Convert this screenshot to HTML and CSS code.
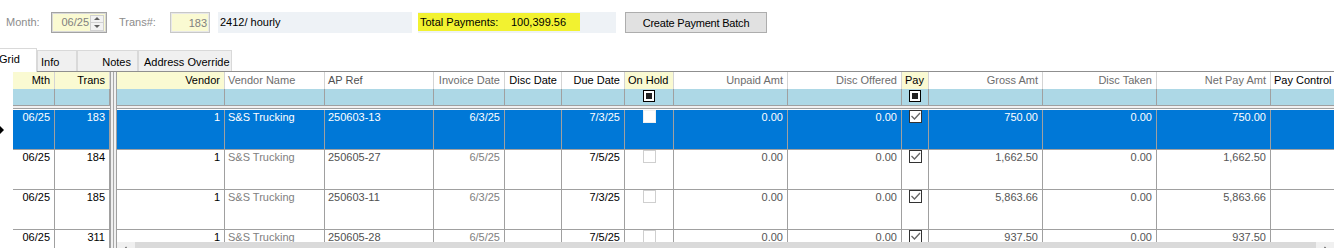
FILE: index.html
```html
<!DOCTYPE html>
<html lang="en">

<head>
  <meta charset="UTF-8" />
  <title>Payment Batch</title>
  <link rel="stylesheet" href="styles.css">
</head>

<body>
  <div class="toolbar">
    <span class="lbl lbl-month">Month:</span>
    <div class="field month">
      <span class="val">06/25</span>
      <div class="spin">
        <span class="up"></span>
        <span class="down"></span>
      </div>
    </div>
    <span class="lbl lbl-trans">Trans#:</span>
    <div class="field trans">183</div>
    <div class="field desc">2412/ hourly</div>
    <div class="field total">
      <div class="hl"><span class="tl">Total Payments:</span><span>100,399.56</span></div>
    </div>
    <button class="btn">Create Payment Batch</button>
  </div>

  <div class="tabs">
    <div class="tab active">Grid</div>
    <div class="tab info">Info</div>
    <div class="tab notes">Notes</div>
    <div class="tab addr">Address Override</div>
  </div>

  <div class="gridarea">
    <!-- frozen columns -->
    <div class="pane left">
      <div class="row hdr">
        <div class="ind"></div>
        <div class="c r y">Mth</div>
        <div class="c r y">Trans</div>
      </div>
      <div class="row flt">
        <div class="ind"></div>
        <div class="c"></div>
        <div class="c"></div>
      </div>
      <div class="sep"></div>
      <div class="row data sel">
        <div class="ind"><span class="arrow"></span></div>
        <div class="c r">06/25</div>
        <div class="c r">183</div>
      </div>
      <div class="row data">
        <div class="ind"></div>
        <div class="c r">06/25</div>
        <div class="c r">184</div>
      </div>
      <div class="row data">
        <div class="ind"></div>
        <div class="c r">06/25</div>
        <div class="c r">185</div>
      </div>
      <div class="row data">
        <div class="ind"></div>
        <div class="c r">06/25</div>
        <div class="c r">311</div>
      </div>
    </div>

    <div class="splitter"></div>

    <div class="pane main">
      <div class="main-body">
        <div class="row hdr">
          <div class="c r y">Vendor</div>
          <div class="c g">Vendor Name</div>
          <div class="c dk">AP Ref</div>
          <div class="c r g">Invoice Date</div>
          <div class="c r">Disc Date</div>
          <div class="c r">Due Date</div>
          <div class="c y">On Hold</div>
          <div class="c r g">Unpaid Amt</div>
          <div class="c r g">Disc Offered</div>
          <div class="c y">Pay</div>
          <div class="c r g">Gross Amt</div>
          <div class="c r g">Disc Taken</div>
          <div class="c r g">Net Pay Amt</div>
          <div class="c last">Pay Control</div>
        </div>
        <div class="row flt">
          <div class="c"></div>
          <div class="c"></div>
          <div class="c"></div>
          <div class="c"></div>
          <div class="c"></div>
          <div class="c"></div>
          <div class="c ck"><span class="tri"></span></div>
          <div class="c"></div>
          <div class="c"></div>
          <div class="c ck"><span class="tri"></span></div>
          <div class="c"></div>
          <div class="c"></div>
          <div class="c"></div>
          <div class="c last"></div>
        </div>
        <div class="sep"></div>

        <div class="row data sel">
          <div class="c r">1</div>
          <div class="c g">S&amp;S Trucking</div>
          <div class="c dk">250603-13</div>
          <div class="c r g">6/3/25</div>
          <div class="c r"></div>
          <div class="c r">7/3/25</div>
          <div class="c ck"><span class="box hold"></span></div>
          <div class="c r m">0.00</div>
          <div class="c r m">0.00</div>
          <div class="c ck"><span class="box pay"><svg viewBox="0 0 11 11" width="11" height="11"><polyline points="1.5,5 4.5,8 10,2" /></svg></span></div>
          <div class="c r m">750.00</div>
          <div class="c r m">0.00</div>
          <div class="c r m">750.00</div>
          <div class="c last"></div>
        </div>

        <div class="row data">
          <div class="c r">1</div>
          <div class="c g">S&amp;S Trucking</div>
          <div class="c dk">250605-27</div>
          <div class="c r g">6/5/25</div>
          <div class="c r"></div>
          <div class="c r">7/5/25</div>
          <div class="c ck"><span class="box hold"></span></div>
          <div class="c r m">0.00</div>
          <div class="c r m">0.00</div>
          <div class="c ck"><span class="box pay"><svg viewBox="0 0 11 11" width="11" height="11"><polyline points="1.5,5 4.5,8 10,2" /></svg></span></div>
          <div class="c r m">1,662.50</div>
          <div class="c r m">0.00</div>
          <div class="c r m">1,662.50</div>
          <div class="c last"></div>
        </div>

        <div class="row data">
          <div class="c r">1</div>
          <div class="c g">S&amp;S Trucking</div>
          <div class="c dk">250603-11</div>
          <div class="c r g">6/3/25</div>
          <div class="c r"></div>
          <div class="c r">7/3/25</div>
          <div class="c ck"><span class="box hold"></span></div>
          <div class="c r m">0.00</div>
          <div class="c r m">0.00</div>
          <div class="c ck"><span class="box pay"><svg viewBox="0 0 11 11" width="11" height="11"><polyline points="1.5,5 4.5,8 10,2" /></svg></span></div>
          <div class="c r m">5,863.66</div>
          <div class="c r m">0.00</div>
          <div class="c r m">5,863.66</div>
          <div class="c last"></div>
        </div>

        <div class="row data">
          <div class="c r">1</div>
          <div class="c g">S&amp;S Trucking</div>
          <div class="c dk">250605-28</div>
          <div class="c r g">6/5/25</div>
          <div class="c r"></div>
          <div class="c r">7/5/25</div>
          <div class="c ck"><span class="box hold"></span></div>
          <div class="c r m">0.00</div>
          <div class="c r m">0.00</div>
          <div class="c ck"><span class="box pay"><svg viewBox="0 0 11 11" width="11" height="11"><polyline points="1.5,5 4.5,8 10,2" /></svg></span></div>
          <div class="c r m">937.50</div>
          <div class="c r m">0.00</div>
          <div class="c r m">937.50</div>
          <div class="c last"></div>
        </div>
      </div>

      <div class="hscroll">
        <div class="sbtn"><svg viewBox="0 0 17 17" width="17" height="17"><polyline points="9.5,5 6.5,8.5 9.5,12" /></svg></div>
        <div class="thumb"></div>
        <div class="sbtn"><svg viewBox="0 0 17 17" width="17" height="17"><polyline points="7.5,5 10.5,8.5 7.5,12" /></svg></div>
      </div>
    </div>
  </div>
</body>

</html>
```

FILE: styles.css
```css
* {
  box-sizing: border-box;
  margin: 0;
  padding: 0;
}

html,
body {
  overflow: hidden;
}

body {
  font-family: 'Liberation Sans', Arial, sans-serif;
  font-size: 11px;
  color: #000;
  background: #fff;
}

/* top bar */
.toolbar {
  display: flex;
  align-items: flex-start;
  height: 48px;
  padding: 12px 0 0 6px;
}

.lbl {
  color: #8c8c8c;
  line-height: 21px;
}

.lbl-month {
  width: 45px;
}

.lbl-trans {
  width: 51px;
  margin-left: 12px;
}

.field {
  height: 21px;
  line-height: 21px;
}

.month {
  width: 56px;
  display: flex;
  justify-content: flex-end;
  align-items: center;
  background: #fafad2;
  border: 1px solid #a3a3a3;
  box-shadow: inset 0 0 0 1px #d8d8d8;
  color: #808080;
  padding-right: 2px;
}

.month .val {
  margin-right: 1px;
}

.spin {
  width: 14px;
  height: 16px;
  border: 1px solid #d0d0d0;
  background: #f2f2f2;
  display: flex;
  flex-direction: column;
}

.spin span {
  flex: 1;
  display: flex;
  align-items: center;
  justify-content: center;
}

.spin .up {
  border-bottom: 1px solid #d0d0d0;
}

.spin .up::after {
  content: '';
  border-left: 3px solid transparent;
  border-right: 3px solid transparent;
  border-bottom: 3px solid #606060;
}

.spin .down::after {
  content: '';
  border-left: 3px solid transparent;
  border-right: 3px solid transparent;
  border-top: 3px solid #606060;
}

.trans {
  width: 40px;
  background: #fafad2;
  border: 1px solid #c8c8c8;
  box-shadow: inset 0 0 0 1px #e8e8e8;
  color: #808080;
  text-align: right;
  padding-right: 2px;
}

.desc {
  width: 194px;
  margin-left: 8px;
  background: #eef2f6;
  padding-left: 2px;
}

.total {
  width: 198px;
  margin-left: 6px;
  background: #eef2f6;
  padding-top: 1px;
}

.hl {
  width: 162px;
  height: 18px;
  line-height: 18px;
  background: #f2f230;
  padding-left: 2px;
  display: flex;
}

.hl .tl {
  width: 91px;
}

.btn {
  width: 142px;
  height: 21px;
  margin-left: 9px;
  background: #e1e1e1;
  border: 1px solid #adadad;
  font-family: inherit;
  font-size: 11px;
  letter-spacing: -0.2px;
  color: #000;
}

/* tabs */
.tabs {
  display: flex;
  align-items: flex-end;
  height: 24px;
  border-bottom: 1px solid #8f8f8f;
}

.tab {
  height: 21px;
  background: #f0f0f0;
  border: 1px solid #d9d9d9;
  border-bottom: none;
  padding-top: 3px;
  line-height: 16px;
}

.tab.active {
  width: 42px;
  height: 24px;
  margin-left: -5px;
  margin-bottom: -1px;
  background: #fff;
  padding: 2px 0 0 3px;
  position: relative;
}

.tab.info {
  width: 40px;
  padding-left: 3px;
}

.tab.notes {
  width: 61px;
  text-align: right;
  padding-right: 6px;
}

.tab.addr {
  width: 94px;
  padding-left: 5px;
}

/* grid */
.gridarea {
  display: flex;
  height: 187px;
}

.left {
  width: 110px;
}

.splitter {
  width: 7px;
  border-left: 1px solid #a0a0a0;
  border-right: 1px solid #a0a0a0;
  background: linear-gradient(to right, #f0f0f0 0 2px, #a8a8a8 2px 3px, #f0f0f0 3px);
}

.main {
  width: 1217px;
  display: flex;
  flex-direction: column;
}

.main-body {
  flex: 1;
  overflow: hidden;
}

.row {
  display: grid;
}

.left .row {
  grid-template-columns: 13px 42px 55px;
}

.main .row {
  grid-template-columns: 108px 100px 109px 71px 57px 63px 49px 114px 114px 27px 114px 114px 114px 63px;
}

.c {
  border-right: 1px solid #a0a0a0;
  padding: 0 4px 0 3px;
  white-space: nowrap;
  overflow: hidden;
}

.c.r {
  text-align: right;
}

.c.last {
  border-right: none;
}

.ind {
  background: #fff;
}

.hdr .c {
  height: 17px;
  line-height: 17px;
  background: #fff;
  border-right-color: #d4d4d4;
}

.hdr .c.y {
  background: #fafad2;
}

.hdr .c.g {
  color: #6d6d6d;
}

.hdr .c.dk {
  color: #505050;
}

.flt .c {
  height: 17px;
  background: #add8e6;
  border-bottom: 1px solid #a0a0a0;
  padding: 1px 0 0;
}

.sep {
  height: 4px;
  background: linear-gradient(#f0f0f0 0 2px, #a0a0a0 2px 3px, #fff 3px);
}

.left .sep {
  margin-left: 13px;
}

.data .c {
  height: 40px;
  line-height: 13px;
  padding-top: 1px;
  border-bottom: 1px solid #a0a0a0;
}

.data .c.g {
  color: #808080;
}

.data .c.dk {
  color: #505050;
}

.data .c.m {
  color: #555;
}

.data .ind {
  display: flex;
  align-items: center;
}

.sel .c,
.sel .c.g,
.sel .c.dk,
.sel .c.m {
  background: #0078d7;
  color: #fff;
}

.arrow {
  border-left: 4px solid #000;
  border-top: 4px solid transparent;
  border-bottom: 4px solid transparent;
}

/* checkboxes */
.c.ck {
  padding: 0;
  display: flex;
  justify-content: center;
  align-items: flex-start;
}

.flt .c.ck {
  padding-top: 1px;
}

.tri {
  width: 12px;
  height: 12px;
  border: 1px solid #000;
  background: #fff;
  display: flex;
  align-items: center;
  justify-content: center;
}

.tri::after {
  content: '';
  width: 6px;
  height: 6px;
  background: #222;
}

.box {
  width: 13px;
  height: 13px;
  background: #fff;
  display: block;
}

.box.hold {
  border: 1px solid #cfcfcf;
}

.sel .box.hold {
  border-color: #f0f0f0;
}

.box.pay {
  border: 1px solid #333;
}

.box svg {
  display: block;
  fill: none;
  stroke: #666;
  stroke-width: 1.3;
}

/* horizontal scroll bar */
.hscroll {
  height: 17px;
  flex: none;
  display: flex;
  background: #f0f0f0;
}

.sbtn {
  width: 17px;
}

.sbtn svg {
  display: block;
  fill: none;
  stroke: #606060;
  stroke-width: 1.2;
}

.thumb {
  flex: 1;
  background: #dadada;
  margin: 0 1px;
}
```
